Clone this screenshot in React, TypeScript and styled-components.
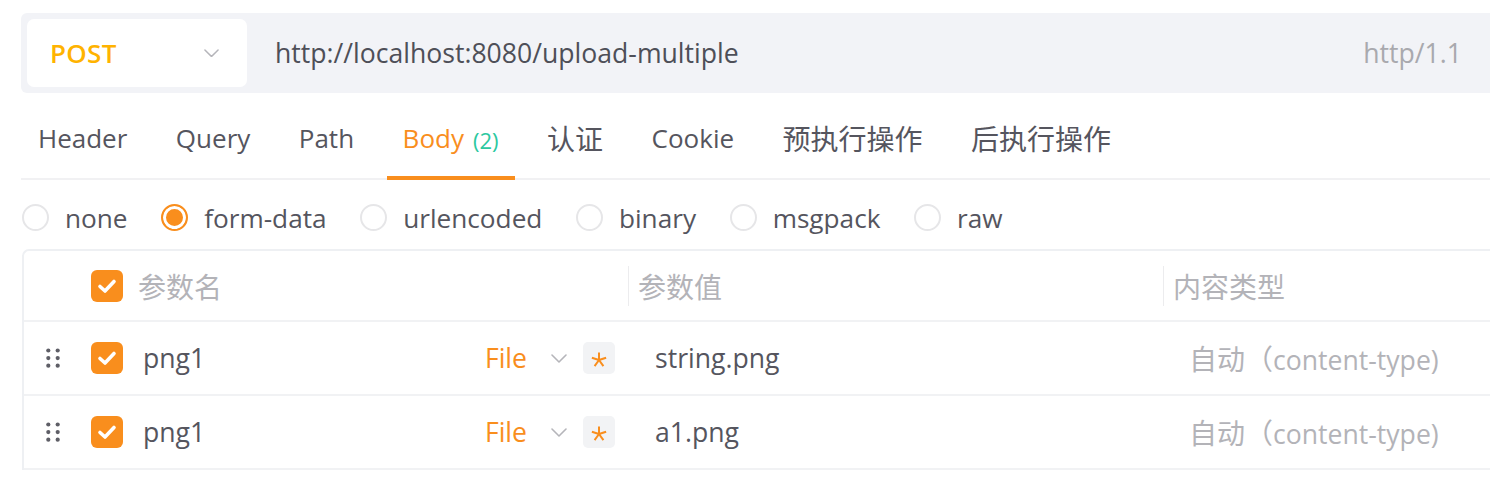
import React from "react";
import styled, { createGlobalStyle } from "styled-components";

const GlobalStyle = createGlobalStyle`
  html, body { margin: 0; padding: 0; background: #ffffff; overflow: hidden; }
  body {
    font-family: "Open Sans", "Noto Sans CJK SC", sans-serif;
    color: #55555e;
  }
  * { box-sizing: border-box; }
`;

const ORANGE = "#f98e1d";

const Page = styled.div`
  width: 1490px;
  height: 478px;
  padding: 13px 0 0 21px;
  display: flex;
  flex-direction: column;
`;

const Cjk = styled.span`
  font-family: "Noto Sans CJK SC", sans-serif;
  font-size: 28px;
`;

const UrlBar = styled.div`
  height: 80px;
  background: #f2f3f7;
  border-radius: 6px 0 0 6px;
  padding: 6px 28px 6px 6px;
  display: flex;
  align-items: center;
`;

const MethodSelect = styled.div`
  width: 220px;
  height: 68px;
  background: #ffffff;
  border-radius: 7px;
  display: flex;
  align-items: center;
  justify-content: space-between;
  padding: 0 28px 0 23px;
`;

const MethodText = styled.span`
  font-size: 26px;
  font-weight: 600;
  color: #ffb300;
  letter-spacing: 0.3px;
`;

const UrlText = styled.span`
  flex: 1;
  margin-left: 28px;
  font-size: 26.6px;
  color: #4e4f58;
`;

const Protocol = styled.span`
  font-size: 26.6px;
  color: #a9a9ae;
`;

const TabBar = styled.div`
  height: 87px;
  display: flex;
  border-bottom: 2px solid #f1f1f3;
  padding-left: 1px;
  gap: 16.5px;
`;

const Tab = styled.div<{ $active?: boolean }>`
  position: relative;
  display: flex;
  align-items: center;
  padding: 5px 16px 0;
  font-size: 26px;
  color: ${(p) => (p.$active ? ORANGE : "#55555e")};
  &::after {
    content: "";
    display: ${(p) => (p.$active ? "block" : "none")};
    position: absolute;
    left: 0;
    right: 0;
    bottom: -2px;
    height: 4px;
    background: ${ORANGE};
  }
`;

const Count = styled.span`
  font-size: 22px;
  color: #2cc8a0;
  margin-left: 9px;
  margin-top: 3px;
`;

const RadioRow = styled.div`
  height: 69px;
  display: flex;
  align-items: center;
  padding: 6px 0 0 1px;
  gap: 33.6px;
`;

const RadioItem = styled.label`
  display: flex;
  align-items: center;
  gap: 16px;
  font-size: 26.2px;
  color: #55555e;
`;

const RadioCircle = styled.span<{ $checked?: boolean }>`
  width: 27px;
  height: 27px;
  border-radius: 50%;
  border: 2px solid ${(p) => (p.$checked ? ORANGE : "#e6e6e8")};
  background: ${(p) => (p.$checked ? ORANGE : "#fff")};
  box-shadow: ${(p) => (p.$checked ? "inset 0 0 0 3px #fff" : "none")};
`;

const Table = styled.div`
  border-top: 2px solid #eef0f3;
  border-left: 2px solid #eef0f3;
  border-top-left-radius: 7px;
  margin-left: 1px;
`;

const HeaderRow = styled.div`
  display: grid;
  grid-template-columns: 67px 32px 505px 535px 1fr;
  align-items: center;
  height: 71px;
  border-bottom: 2px solid #f1f2f4;
`;

const DataRow = styled.div`
  display: grid;
  grid-template-columns: 67px 32px 505px 535px 1fr;
  align-items: center;
  height: 74px;
  border-bottom: 2px solid #f1f2f4;
`;

const HeaderLabel = styled.div<{ $divider?: boolean; $pad: number }>`
  font-family: "Noto Sans CJK SC", sans-serif;
  font-size: 28px;
  color: #b3b3b8;
  padding-left: ${(p) => p.$pad}px;
  height: 40px;
  display: flex;
  align-items: center;
  border-left: ${(p) => (p.$divider ? "1px solid #ececee" : "none")};
`;

const Handle = styled.div`
  padding-left: 22px;
  display: flex;
  align-items: center;
`;

const Box = styled.span`
  width: 32px;
  height: 32px;
  border-radius: 6px;
  background: ${ORANGE};
  display: flex;
  align-items: center;
  justify-content: center;
`;

const NameCell = styled.div`
  display: flex;
  align-items: center;
  padding-right: 13px;
`;

const NameText = styled.span`
  flex: 1;
  padding-left: 20px;
  font-size: 26.6px;
  color: #55555e;
`;

const TypeText = styled.span`
  font-size: 26.6px;
  color: ${ORANGE};
  margin-right: 24px;
`;

const Chevron = styled.span`
  display: flex;
  margin-right: 16px;
`;

const RequiredBox = styled.span`
  width: 32px;
  height: 32px;
  border-radius: 5px;
  background: #f2f3f5;
  display: flex;
  align-items: center;
  justify-content: center;
  padding-top: 3px;
`;

const ValueText = styled.span<{ $muted?: boolean; $pad: number }>`
  font-size: 26.6px;
  color: ${(p) => (p.$muted ? "#b3b3b8" : "#55555e")};
  padding-left: ${(p) => p.$pad}px;
  white-space: nowrap;
`;

const Check = () => (
  <svg width="20" height="16" viewBox="0 0 20 16">
    <path d="M3 8.5 L8 13 L17 3.5" fill="none" stroke="#fff" strokeWidth="3.6" strokeLinecap="round" strokeLinejoin="round" />
  </svg>
);

const Dots = () => (
  <svg width="14" height="20" viewBox="0 0 14 20">
    {[0, 1, 2].map((r) =>
      [0, 1].map((c) => (
        <circle key={`${r}-${c}`} cx={2.3 + c * 9.4} cy={2.5 + r * 7.6} r="2.1" fill="#5e5e66" />
      ))
    )}
  </svg>
);

const ChevronIcon = ({ w = 16 }: { w?: number }) => (
  <svg width={w} height={w / 2 + 1} viewBox="0 0 16 9">
    <path d="M1 1 L8 8 L15 1" fill="none" stroke="#b5b5ba" strokeWidth="1.6" strokeLinecap="round" strokeLinejoin="round" />
  </svg>
);

const Asterisk = () => {
  const arms = [-90, -18, 54, 126, 198];
  return (
    <svg width="16" height="16" viewBox="-8 -8 16 16">
      {arms.map((a) => {
        const rad = (a * Math.PI) / 180;
        return (
          <line key={a} x1="0" y1="0" x2={7.5 * Math.cos(rad)} y2={7.5 * Math.sin(rad)} stroke={ORANGE} strokeWidth="2" strokeLinecap="butt" />
        );
      })}
    </svg>
  );
};

const tabs = [
  { label: "Header" },
  { label: "Query" },
  { label: "Path" },
  { label: "Body", active: true, count: 2 },
  { label: "认证", cjk: true },
  { label: "Cookie" },
  { label: "预执行操作", cjk: true },
  { label: "后执行操作", cjk: true },
];
const radios = ["none", "form-data", "urlencoded", "binary", "msgpack", "raw"];
const rows = [
  { name: "png1", value: "string.png" },
  { name: "png1", value: "a1.png" },
];

export default function App() {
  return (
    <>
      <GlobalStyle />
      <Page>
        <UrlBar>
          <MethodSelect>
            <MethodText>POST</MethodText>
            <ChevronIcon w={15} />
          </MethodSelect>
          <UrlText>http://localhost:8080/upload-multiple</UrlText>
          <Protocol>http/1.1</Protocol>
        </UrlBar>
        <TabBar>
          {tabs.map((t) => (
            <Tab key={t.label} $active={t.active}>
              {t.cjk ? <Cjk>{t.label}</Cjk> : t.label}
              {t.count !== undefined && <Count>({t.count})</Count>}
            </Tab>
          ))}
        </TabBar>
        <RadioRow>
          {radios.map((r) => (
            <RadioItem key={r}>
              <RadioCircle $checked={r === "form-data"} />
              {r}
            </RadioItem>
          ))}
        </RadioRow>
        <Table>
          <HeaderRow>
            <div />
            <Box>
              <Check />
            </Box>
            <HeaderLabel $pad={15}>参数名</HeaderLabel>
            <HeaderLabel $pad={9} $divider>参数值</HeaderLabel>
            <HeaderLabel $pad={9} $divider>内容类型</HeaderLabel>
          </HeaderRow>
          {rows.map((r, i) => (
            <DataRow key={i}>
              <Handle>
                <Dots />
              </Handle>
              <Box>
                <Check />
              </Box>
              <NameCell>
                <NameText>{r.name}</NameText>
                <TypeText>File</TypeText>
                <Chevron>
                  <ChevronIcon />
                </Chevron>
                <RequiredBox>
                  <Asterisk />
                </RequiredBox>
              </NameCell>
              <ValueText $pad={27}>{r.value}</ValueText>
              <ValueText $pad={26} $muted>
                <Cjk>自动（</Cjk>content-type)
              </ValueText>
            </DataRow>
          ))}
        </Table>
      </Page>
    </>
  );
}
